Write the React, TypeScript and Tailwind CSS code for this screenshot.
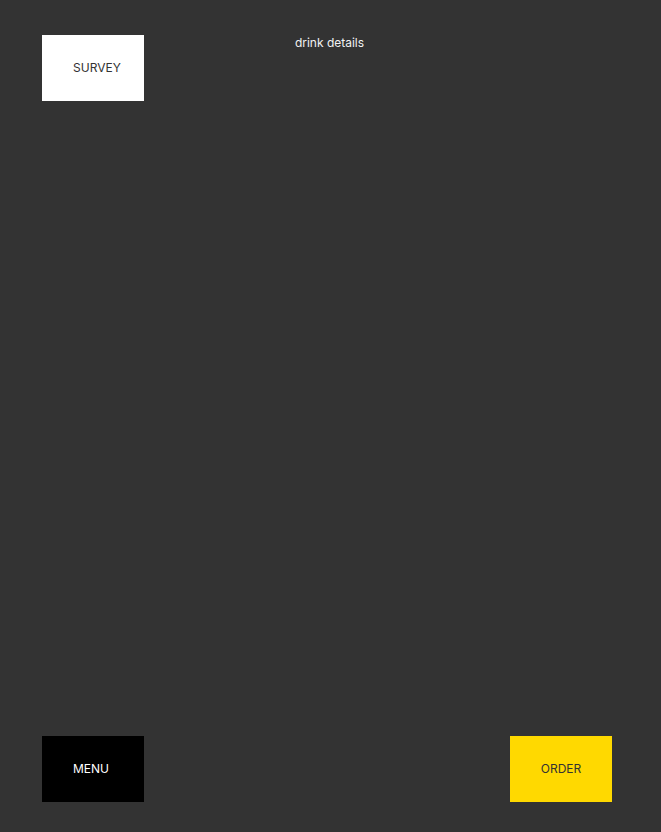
export default function App() {
  return (
    <div
      className="flex h-[832px] w-full flex-col justify-between bg-[#333333] pb-[30px] pl-[42px] pr-[49px] pt-[35px] text-xs"
      style={{ fontFamily: 'Inter, "Noto Sans", sans-serif' }}
    >
      <div className="flex items-start">
        <button
          type="button"
          className="flex h-[66px] w-[102px] items-center justify-center bg-white pl-[8px] text-[#333333]"
        >
          SURVEY
        </button>
        <div className="flex-1 pl-[5px] text-center leading-4 text-[#f2f2f2]">drink details</div>
        <div className="w-[102px]" />
      </div>

      <div className="flex items-end justify-between">
        <button
          type="button"
          className="flex h-[66px] w-[102px] items-center justify-center bg-black pr-[4px] text-white"
        >
          MENU
        </button>
        <button
          type="button"
          className="flex h-[66px] w-[102px] items-center justify-center bg-[#ffd900] text-[#333333]"
        >
          ORDER
        </button>
      </div>
    </div>
  )
}
